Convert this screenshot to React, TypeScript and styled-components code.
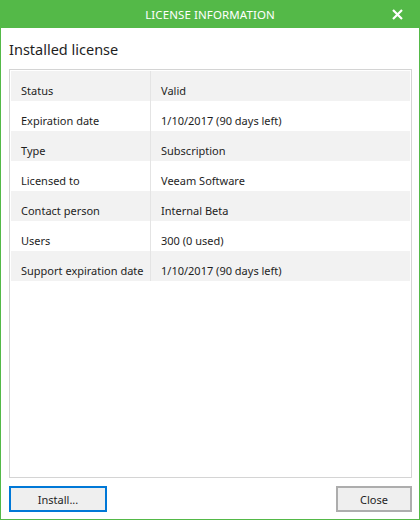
import React from "react";
import styled, { createGlobalStyle } from "styled-components";

const GlobalStyle = createGlobalStyle`
  html, body {
    margin: 0;
    padding: 0;
    background: #ffffff;
  }
  body {
    font-family: "Noto Sans", "DejaVu Sans", sans-serif;
    color: #1e1e1e;
  }
`;

const GREEN = "#54b948";

const Window = styled.div`
  width: 420px;
  height: 520px;
  box-sizing: border-box;
  border: 1px solid ${GREEN};
  border-top: none;
  display: flex;
  flex-direction: column;
  background: #ffffff;
`;

const TitleBar = styled.div`
  height: 28px;
  margin: 0 -1px;
  background: ${GREEN};
  display: grid;
  grid-template-columns: 40px 1fr 40px;
  align-items: center;
`;

const Title = styled.div`
  grid-column: 2;
  text-align: center;
  color: #ffffff;
  font-size: 11.5px;
  letter-spacing: 0.1px;
`;

const CloseIcon = styled.button`
  justify-self: start;
  margin-left: 11px;
  width: 12px;
  height: 12px;
  padding: 0;
  border: none;
  background: transparent;
  display: flex;
  align-items: center;
  justify-content: center;
`;

const Body = styled.div`
  flex: 1;
  display: flex;
  flex-direction: column;
  padding: 0 7px 7px 8px;
  min-height: 0;
`;

const Heading = styled.div`
  height: 41px;
  display: flex;
  align-items: center;
  font-size: 14.5px;
  color: #1e1e1e;
`;

const InfoBox = styled.div`
  flex: 1;
  border: 1px solid #d4d4d4;
  padding: 1px;
`;

const Row = styled.div<{ $shaded: boolean }>`
  display: grid;
  grid-template-columns: 140px 1fr;
  height: 30px;
  background: ${(p) => (p.$shaded ? "#f2f2f2" : "#ffffff")};
  font-size: 11px;
  line-height: 14px;
`;

const Cell = styled.div<{ $label?: boolean }>`
  display: flex;
  align-items: flex-end;
  padding: 0 0 3px 10px;
  border-right: ${(p) => (p.$label ? "1px solid #e4e4e4" : "none")};
  white-space: nowrap;
`;

const ButtonRow = styled.div`
  display: flex;
  justify-content: space-between;
  margin-top: 8px;
`;

const Button = styled.button<{ $primary?: boolean; $width: number }>`
  width: ${(p) => p.$width}px;
  height: 26px;
  box-sizing: border-box;
  border: 2px solid ${(p) => (p.$primary ? "#0078d7" : "#adadad")};
  background: #efefef;
  font-family: "Noto Sans", "DejaVu Sans", sans-serif;
  font-size: 11px;
  color: #1e1e1e;
  padding: 0;
`;

const rows: [string, string][] = [
  ["Status", "Valid"],
  ["Expiration date", "1/10/2017 (90 days left)"],
  ["Type", "Subscription"],
  ["Licensed to", "Veeam Software"],
  ["Contact person", "Internal Beta"],
  ["Users", "300 (0 used)"],
  ["Support expiration date", "1/10/2017 (90 days left)"],
];

export default function App() {
  return (
    <>
      <GlobalStyle />
      <Window>
        <TitleBar>
          <Title>LICENSE INFORMATION</Title>
          <CloseIcon aria-label="Close">
            <svg width="11" height="11" viewBox="0 0 11 11">
              <path d="M1 1 L10 10 M10 1 L1 10" stroke="#ffffff" strokeWidth="2.2" />
            </svg>
          </CloseIcon>
        </TitleBar>
        <Body>
          <Heading>Installed license</Heading>
          <InfoBox>
            {rows.map(([label, value], i) => (
              <Row key={label} $shaded={i % 2 === 0}>
                <Cell $label>{label}</Cell>
                <Cell>{value}</Cell>
              </Row>
            ))}
          </InfoBox>
          <ButtonRow>
            <Button $primary $width={98}>Install...</Button>
            <Button $width={76}>Close</Button>
          </ButtonRow>
        </Body>
      </Window>
    </>
  );
}
